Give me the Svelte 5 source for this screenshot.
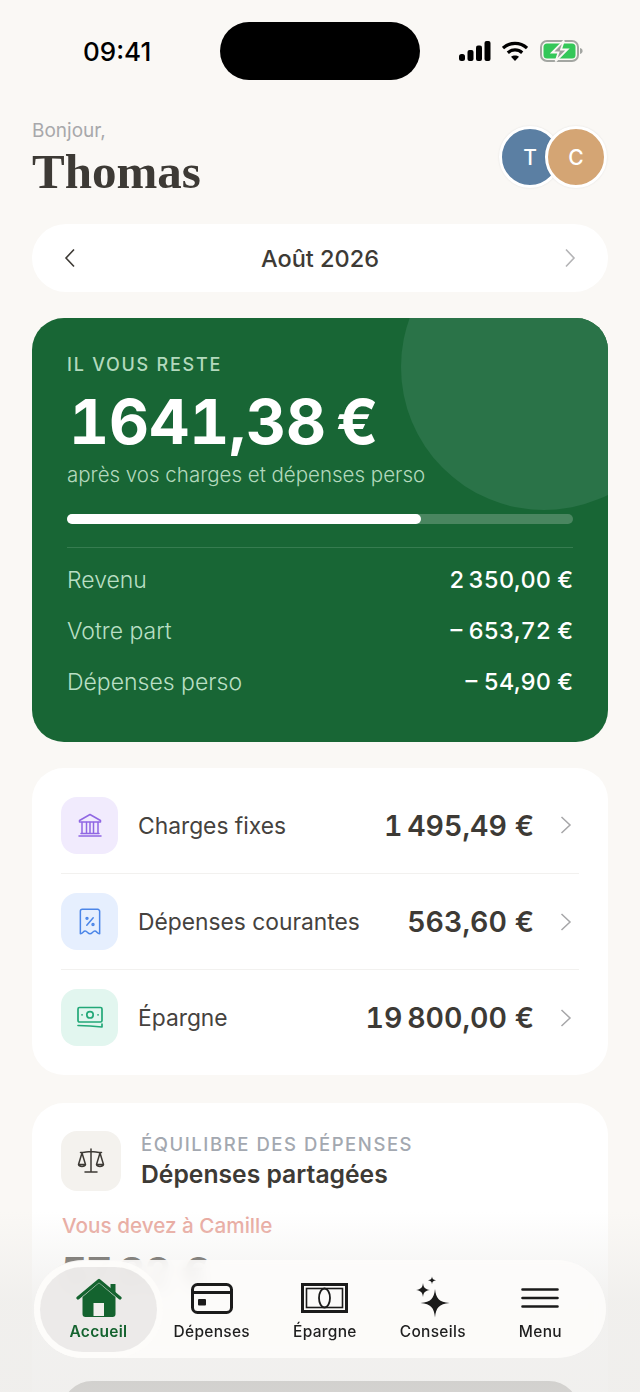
<script>
  const lines = [
    { label: "Revenu", value: "2\u202f350,00 €" },
    { label: "Votre part", value: "– 653,72 €" },
    { label: "Dépenses perso", value: "– 54,90 €" }
  ];
  const rows = [
    { label: "Charges fixes", value: "1\u202f495,49 €", tone: "violet", icon: "bank" },
    { label: "Dépenses courantes", value: "563,60 €", tone: "blue", icon: "receipt" },
    { label: "Épargne", value: "19\u202f800,00 €", tone: "mint", icon: "cash" }
  ];
</script>

<div class="screen">
  <div class="status">
    <span class="time">09:41</span>
    <div class="island"></div>
    <div class="status-icons">
      <svg class="signal" width="32" height="20" viewBox="0 0 32 20" fill="#000">
        <rect x="0" y="13" width="6" height="7" rx="2.500" />
        <rect x="8.500" y="9" width="6" height="11" rx="2" />
        <rect x="17" y="4.500" width="6" height="15.500" rx="2" />
        <rect x="25.500" y="0" width="6" height="20" rx="2" />
      </svg>
      <svg class="wifi" width="26" height="20" viewBox="0 0 26 20" fill="none" stroke="#000" stroke-width="3.200">
        <path d="M1 7C7.800.8 18.200.8 25 7" />
        <path d="M5.800 11.800C10 8 16 8 20.200 11.800" />
        <path d="M13 20 9 15.800C11.200 14 14.800 14 17 15.800Z" fill="#000" stroke="none" />
      </svg>
      <svg width="44" height="22" viewBox="0 0 44 22">
        <rect x="1" y="1" width="37" height="20" rx="6" fill="none" stroke="#a3a6a2" stroke-width="2" />
        <rect x="3.500" y="3.500" width="32" height="15" rx="3.500" fill="#34c759" />
        <path d="M40 8v6c1.800-.4 2.600-1.600 2.600-3S41.800 8.400 40 8Z" fill="#a3a6a2" />
        <path d="M24 .5 12 12.500h6.500L15.500 21.500 27.500 9.500H21Z" fill="#9a9d99" stroke="#faf8f5" stroke-width="1.800" />
      </svg>
    </div>
  </div>

  <header class="head">
    <div>
      <div class="hello">Bonjour,</div>
      <h1>Thomas</h1>
    </div>
    <div class="avatars">
      <span class="avatar t">T</span>
      <span class="avatar c">C</span>
    </div>
  </header>

  <div class="month">
    <svg width="14" height="20" viewBox="0 0 14 20" fill="none" stroke="#3d3a35" stroke-width="1.600"><path d="M11 1.500 3 10l8 8.500" /></svg>
    <span>Août 2026</span>
    <svg width="14" height="20" viewBox="0 0 14 20" fill="none" stroke="#b4b4b6" stroke-width="1.600"><path d="M3 1.500 11 10l-8 8.500" /></svg>
  </div>

  <section class="hero">
    <div class="hero-circle"></div>
    <div class="hero-label">IL VOUS RESTE</div>
    <div class="hero-amount">1641,38{"\u202f"}€</div>
    <div class="hero-sub">après vos charges et dépenses perso</div>
    <div class="bar"><div class="bar-fill" style="width: 70%"></div></div>
    <div class="hero-lines">
      {#each lines as line}
        <div class="hero-line">
          <span>{line.label}</span>
          <strong>{line.value}</strong>
        </div>
      {/each}
    </div>
  </section>

  <section class="card list">
    {#each rows as row}
      <div class="row">
        <span class="tile {row.tone}">
          {#if row.icon === "bank"}
            <svg width="26" height="26" viewBox="0 0 26 26" fill="none" stroke="#9067e3" stroke-width="1.500" stroke-linejoin="round" stroke-linecap="round">
              <path d="M13 2.500 2.500 8.500v1.500h21V8.500Z" />
              <path d="M5 10.500V21M9.500 10.500V21M13 10.500V21M16.500 10.500V21M21 10.500V21M4 21.500h18M2 24h22" />
            </svg>
          {:else if row.icon === "receipt"}
            <svg width="28" height="30" viewBox="0 0 26 28" fill="none" stroke="#4c86e8" stroke-width="1.400" stroke-linejoin="round" stroke-linecap="round">
              <path d="M4 25V4a1.800 1.800 0 0 1 1.800-1.800h14.400A1.800 1.800 0 0 1 22 4v21c-2.500 0-2.500-2.500-4.500-2.500S15 25 13 25s-2.500-2.500-4.500-2.500S6.500 25 4 25Z" />
              <path d="m16 10-6 7" />
              <circle cx="10.200" cy="10.600" r=".9" />
              <circle cx="15.800" cy="16.400" r=".9" />
            </svg>
          {:else}
            <svg width="28" height="26" viewBox="0 0 28 26" fill="none" stroke="#23a878" stroke-width="1.700" stroke-linecap="round" stroke-linejoin="round">
              <rect x="2" y="2.500" width="24" height="14.500" rx="1.500" />
              <circle cx="14" cy="9.800" r="3.200" />
              <path d="M6 9.800h.1M22 9.800h.1M2 20.500c8 .3 16 .8 24 1.500v-3" />
            </svg>
          {/if}
        </span>
        <span class="row-label">{row.label}</span>
        <strong class="row-value">{row.value}</strong>
        <svg class="chev" width="14" height="20" viewBox="0 0 14 20" fill="none" stroke="#a6a6a8" stroke-width="1.500"><path d="M2.500 2 11 10l-8.500 8" /></svg>
      </div>
    {/each}
  </section>

  <section class="card balance">
    <div class="balance-head">
      <span class="tile sand">
        <svg width="32" height="32" viewBox="0 0 32 32" fill="none" stroke="#3d3a35" stroke-width="1.500" stroke-linecap="round" stroke-linejoin="round">
          <path d="M16 4v22M10 27h12M5.500 7.500c4 0 7-1 10.500-1s6.500 1 10.500 1" />
          <path d="M7 8 3.500 19.500h7ZM3.500 19.500c.5 2.500 6.500 2.500 7 0M25 8l-3.500 11.500h7ZM21.500 19.500c.5 2.500 6.500 2.500 7 0" />
        </svg>
      </span>
      <div>
        <div class="balance-label">ÉQUILIBRE DES DÉPENSES</div>
        <div class="balance-title">Dépenses partagées</div>
      </div>
    </div>
    <div class="owe">Vous devez à Camille</div>
    <div class="owe-amount">57,82 €</div>
    <div class="settle"></div>
  </section>

  <div class="fade"></div>

  <nav class="tabs">
    <div class="tab active">
      <span class="ico">
        <svg width="46" height="40" viewBox="0 0 46 40">
          <path d="M6.500 19 23 5l16.500 14v17a3 3 0 0 1-3 3h-27a3 3 0 0 1-3-3Z" fill="#14632f" />
          <path d="M2 20 23 2.500 44 20" fill="none" stroke="#14632f" stroke-width="3.200" stroke-linecap="round" stroke-linejoin="round" />
          <path d="M34.500 6h5v11l-5-4Z" fill="#14632f" />
          <rect x="17.500" y="25" width="10.500" height="13" fill="#f1f0ed" />
        </svg>
      </span>
      <span>Accueil</span>
    </div>
    <div class="tab">
      <span class="ico">
        <svg width="42" height="31" viewBox="0 0 42 31" fill="none" stroke="#1b1b1b" stroke-width="3">
          <rect x="1.500" y="1.500" width="39" height="28" rx="5" />
          <path d="M1.500 9.500h39" />
          <rect x="7" y="16" width="8" height="6.500" rx="1" fill="#1b1b1b" stroke="none" />
        </svg>
      </span>
      <span>Dépenses</span>
    </div>
    <div class="tab">
      <span class="ico">
        <svg width="47" height="30" viewBox="0 0 47 30" fill="none" stroke="#1b1b1b">
          <rect x="1.500" y="1.500" width="44" height="27" stroke-width="3" />
          <rect x="5.500" y="5.500" width="36" height="19" stroke-width="1.600" />
          <ellipse cx="23.500" cy="15" rx="5.500" ry="9.500" stroke-width="1.800" />
        </svg>
      </span>
      <span>Épargne</span>
    </div>
    <div class="tab">
      <span class="ico">
        <svg width="36" height="44" viewBox="0 0 36 44" fill="#1b1b1b">
          <path d="M20 13c1 9.500 4 13 14.500 14C24 28 21 31.500 20 41.500 19 31.500 16 28 5.500 27 16 26 19 22.500 20 13Z" />
          <path d="M8 7c.5 4.500 2 6.200 7 7-5 .8-6.500 2.500-7 7-.5-4.500-2-6.200-7-7 5-.8 6.500-2.500 7-7Z" />
          <path d="M17 .5c.3 2.500 1.200 3.300 4 3.800-2.800.5-3.700 1.300-4 3.900-.3-2.600-1.200-3.400-4-3.900 2.800-.5 3.700-1.300 4-3.800Z" />
        </svg>
      </span>
      <span>Conseils</span>
    </div>
    <div class="tab menu">
      <span class="ico">
        <svg width="38" height="20" viewBox="0 0 38 20" fill="none" stroke="#1b1b1b" stroke-width="2.600" stroke-linecap="round">
          <path d="M1.500 1.500h35M1.500 10h35M1.500 18.500h35" />
        </svg>
      </span>
      <span>Menu</span>
    </div>
  </nav>
</div>

<style>
  :global(body) {
    margin: 0;
    background: #faf8f5;
  }

  .screen {
    position: relative;
    width: 640px;
    height: 1392px;
    overflow: hidden;
    background: #faf8f5;
    font-family: Inter, "Liberation Sans", sans-serif;
    color: #3d3a35;
  }

  .status {
    display: flex;
    align-items: center;
    height: 58px;
    padding: 22px 56px 0 83px;
  }

  .time {
    font-size: 26px;
    font-weight: 500;
    color: #000;
    width: 137px;
  }

  .island {
    width: 200px;
    height: 58px;
    border-radius: 29px;
    background: #000;
  }

  .status-icons {
    display: flex;
    align-items: center;
    gap: 12px;
    margin-left: auto;
  }

  .signal {
    margin-right: -1px;
  }

  .head {
    display: flex;
    justify-content: space-between;
    align-items: flex-start;
    padding: 39px 32px 0;
    height: 144px;
    box-sizing: border-box;
  }

  .hello {
    font-size: 19px;
    line-height: 24px;
    color: #a8a8ab;
  }

  h1 {
    margin: 5px 0 0;
    font-family: "Liberation Serif", serif;
    font-size: 49px;
    line-height: 48px;
    font-weight: 700;
    color: #3d3a35;
  }

  .avatars {
    display: flex;
    padding-right: 1px;
    margin-top: 7px;
  }

  .avatar {
    border-radius: 50%;
    border: 3px solid #fff;
    box-sizing: border-box;
    width: 62px;
    height: 62px;
    display: flex;
    align-items: center;
    justify-content: center;
    color: #fff;
    font-size: 21px;
    font-weight: 500;
    box-shadow: 0 0 2px rgba(0, 0, 0, 0.1);
  }

  .avatar.t {
    background: #5b7fa3;
  }

  .avatar.c {
    background: #d4a574;
    margin-left: -16px;
    position: relative;
  }

  .month {
    display: flex;
    justify-content: space-between;
    align-items: center;
    height: 68px;
    margin: 0 32px;
    padding: 0 31px;
    border-radius: 34px;
    background: #fff;
    font-size: 23.500px;
    font-weight: 500;
    color: #3d3a35;
  }

  .hero {
    position: relative;
    overflow: hidden;
    height: 424px;
    box-sizing: border-box;
    margin: 26px 32px 26px;
    padding: 35px 35px 0;
    border-radius: 32px;
    background: #186635;
  }

  .hero-circle {
    position: absolute;
    top: -94px;
    right: -79px;
    width: 286px;
    height: 286px;
    border-radius: 50%;
    background: #2a7348;
  }

  .hero-label {
    position: relative;
    font-size: 18px;
    line-height: 24px;
    font-weight: 500;
    letter-spacing: 1.750px;
    color: #b3d9bd;
  }

  .hero-amount {
    position: relative;
    margin-top: 7px;
    font-size: 62px;
    line-height: 76px;
    font-weight: 700;
    font-variant-numeric: tabular-nums;
    color: #fff;
    padding-left: 2px;
  }

  .hero-sub {
    position: relative;
    margin-top: 1px;
    font-size: 20.500px;
    line-height: 28px;
    font-weight: 300;
    color: #b3d9bd;
  }

  .bar {
    position: relative;
    height: 10px;
    margin-top: 25px;
    border-radius: 5px;
    background: #4a8660;
  }

  .bar-fill {
    height: 100%;
    border-radius: 5px;
    background: #fff;
  }

  .hero-lines {
    position: relative;
    margin-top: 23px;
    padding-top: 6px;
    border-top: 1px solid #367c50;
  }

  .hero-line {
    display: flex;
    justify-content: space-between;
    align-items: center;
    height: 51px;
    font-size: 23px;
    font-weight: 300;
    color: #b9dfc4;
  }

  .hero-line strong {
    font-size: 23.500px;
    font-weight: 500;
    font-variant-numeric: tabular-nums;
    color: #fff;
  }

  .card {
    margin: 0 32px;
    border-radius: 32px;
    background: #fff;
  }

  .list {
    margin-bottom: 28px;
    padding: 9px 29px;
    height: 307px;
    box-sizing: border-box;
  }

  .row {
    display: flex;
    align-items: center;
    height: 96px;
    box-sizing: border-box;
  }

  .row + .row {
    border-top: 1px solid #f2f1ef;
  }

  .tile {
    display: flex;
    align-items: center;
    justify-content: center;
    flex: none;
    width: 57px;
    height: 57px;
    border-radius: 16px;
  }

  .tile.violet {
    background: #f1ebfd;
  }

  .tile.blue {
    background: #e6effe;
  }

  .tile.mint {
    background: #e2f6ef;
  }

  .tile.sand {
    width: 60px;
    height: 60px;
    background: #f4f2ee;
  }

  .row-label {
    flex: 1;
    margin-left: 20px;
    font-size: 22.800px;
    color: #45423e;
  }

  .row-value {
    font-size: 28.500px;
    font-weight: 600;
    font-variant-numeric: tabular-nums;
    color: #3d3a35;
  }

  .chev {
    margin-left: 25px;
    margin-right: 6px;
  }

  .balance {
    height: 420px;
    padding: 28px 29px;
    box-sizing: border-box;
  }

  .balance-head {
    display: flex;
    align-items: center;
    gap: 20px;
  }

  .balance-label {
    font-size: 18.500px;
    line-height: 26px;
    font-weight: 500;
    letter-spacing: 1.560px;
    color: #a3a8b0;
  }

  .balance-title {
    font-size: 24.700px;
    line-height: 34px;
    font-weight: 600;
    color: #3d3a35;
  }

  .owe {
    margin-top: 21px;
    padding-left: 1px;
    font-size: 20.700px;
    line-height: 28px;
    font-weight: 500;
    color: #e8a79d;
  }

  .owe-amount {
    margin-top: 2px;
    font-size: 41px;
    line-height: 60px;
    font-weight: 700;
    color: #3d3a35;
  }

  .settle {
    height: 60px;
    margin-top: 79px;
    margin-left: 1px;
    border-radius: 30px;
    background: #3d3a35;
  }

  .fade {
    position: absolute;
    left: 0;
    right: 0;
    bottom: 0;
    height: 180px;
    background: linear-gradient(to bottom, rgba(238, 237, 235, 0) 0%, rgba(238, 237, 235, 0.78) 50%, rgba(238, 237, 235, 0.85) 100%);
  }

  .tabs {
    position: absolute;
    left: 34px;
    top: 1260px;
    display: flex;
    align-items: flex-start;
    width: 572px;
    height: 98px;
    box-sizing: border-box;
    padding: 7px 6px 0;
    border-radius: 49px;
    background: rgba(253, 252, 250, 0.88);
    backdrop-filter: blur(7px);
  }

  .tab {
    display: flex;
    flex-direction: column;
    align-items: center;
    height: 85px;
    padding: 9px 21.500px 0;
    box-sizing: border-box;
    font-size: 15.500px;
    line-height: 18px;
    font-weight: 500;
    letter-spacing: 0.300px;
    color: #1f1f1f;
  }

  .ico {
    display: flex;
    align-items: center;
    justify-content: center;
    height: 44px;
    margin-bottom: 3px;
  }

  .tab.active {
    flex: none;
    width: 117px;
    padding-left: 0;
    padding-right: 0;
    margin-right: -5px;
    border-radius: 43px;
    background: rgba(225, 224, 221, 0.6);
    box-shadow: 0 0 0 6px rgba(253, 252, 250, 0.9);
    color: #14632f;
    font-weight: 600;
  }

  .tab.menu {
    margin-left: 10px;
  }
</style>
